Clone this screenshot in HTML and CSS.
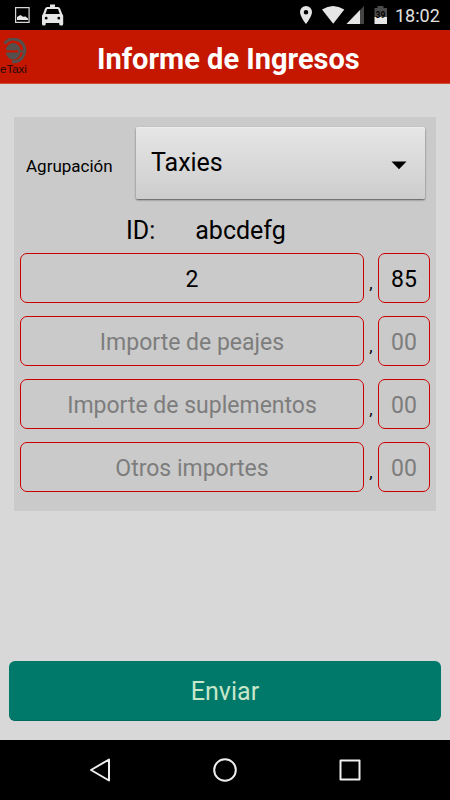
FILE: index.html
```html
<!DOCTYPE html>
<html lang="es">
<head>
<meta charset="utf-8">
<title>Informe de Ingresos</title>
<link rel="stylesheet" href="styles.css">
</head>
<body>
<div class="screen">
  <div class="status">
    <svg class="status-icons" width="70" height="30" viewBox="0 0 70 30">
      <path d="M15.6 7.6h13.5v14.8H15.6z" fill="none" stroke="#d6d6d6" stroke-width="1.2"/>
      <path d="M17 20v-3l3.500-2 2.500 1.800 2.500-.3 2.500 2V20z" fill="#e8e8e8"/>
      <path fill="#e6e6e6" fill-rule="evenodd" d="M50 4.600h5v2.500h3q1.600 0 2.200 1.600L62.200 14q1 1 1 2v8q0 1.500-1.500 1.500h-1q-1.500 0-1.500-1.500v-1H45.700v1q0 1.500-1.500 1.500h-.7Q42 25.500 42 24v-8q0-1 1-2l2-5.300q.6-1.600 2.200-1.600H50zM47.200 9l-1.800 5h14.400L58 9zM44.800 18.200a1.400 1.400 0 1 0 2.800 0 1.400 1.400 0 1 0-2.800 0M57.400 18.200a1.400 1.400 0 1 0 2.800 0 1.400 1.400 0 1 0-2.800 0"/>
    </svg>
    <svg class="status-icons" width="100" height="30" viewBox="290 0 100 30">
      <path fill="#e6e6e6" fill-rule="evenodd" d="M306 6a6 6 0 0 1 6 6c0 4.500-6 12-6 12s-6-7.500-6-12a6 6 0 0 1 6-6zm0 3.900a2.300 2.300 0 1 0 0 4.600 2.300 2.300 0 0 0 0-4.600z"/>
      <path fill="#e6e6e6" d="M322 9.500Q333 2.500 344.300 9.500L333.200 23.800z"/>
      <path fill="#444" d="M364 6v18h-17.500z"/>
      <path fill="#e6e6e6" d="M360 10v14h-13.500z"/>
      <path fill="#4b4b4b" d="M374.500 8h3V6h6v2h3.500v10h-12.500z"/>
      <path fill="#e6e6e6" d="M374.500 17H387v7h-12.500z"/>
      <text class="charge" x="380.500" y="18">39</text>
    </svg>
    <span class="clock">18:02</span>
  </div>
  <header class="header">
    <div class="brand">
      <svg class="brand-mark" width="28" height="28" viewBox="0 0 28 28">
        <path d="M4.500 5.500A11.300 11.300 0 1 1 12 23.600" fill="none" stroke="#55504d" stroke-width="3"/>
        <path d="M6 12.200a7 7 0 0 1 14.300 0zM6 14.500h14.300a7 7 0 0 1-14.300 0z" fill="#55504d"/>
        <path d="M18 12.200h7v2.300h-7z" fill="#55504d"/>
      </svg>
      <span class="brand-name">eTaxi</span>
    </div>
    <h1 class="title">Informe de Ingresos</h1>
  </header>
  <main class="main">
    <section class="card">
      <div class="group">
        <span class="label">Agrupación</span>
        <div class="select"><span>Taxies</span><svg width="16" height="9" viewBox="0 0 16 9"><path d="M.5.5h15L8 8.300z"/></svg></div>
      </div>
      <div class="id-row"><span>ID:</span><span>abcdefg</span></div>
      <div class="rows">
        <div class="row"><div class="field">2</div><span class="comma">,</span><div class="field cents">85</div></div>
        <div class="row"><div class="field hint">Importe de peajes</div><span class="comma">,</span><div class="field cents hint">00</div></div>
        <div class="row"><div class="field hint">Importe de suplementos</div><span class="comma">,</span><div class="field cents hint">00</div></div>
        <div class="row"><div class="field hint">Otros importes</div><span class="comma">,</span><div class="field cents hint">00</div></div>
      </div>
    </section>
    <div class="send">Enviar</div>
  </main>
  <nav class="nav">
    <svg width="450" height="60" viewBox="0 0 450 60" fill="none" stroke="#eee" stroke-width="2" stroke-linejoin="round">
      <path d="M109 19.500v21L91 30z"/>
      <circle cx="225" cy="30" r="10.800"/>
      <path d="M340.500 20.500h19v19h-19z"/>
    </svg>
  </nav>
</div>
</body>
</html>
```

FILE: styles.css
```css
* { box-sizing: border-box; }
body { margin: 0; font-family: Roboto, sans-serif; color: #000; }
svg { display: block; }
.screen { width: 450px; height: 800px; display: flex; flex-direction: column; background: #d8d8d8; overflow: hidden; }
.status { height: 30px; display: flex; background: #000; color: #e0e0e0; }
.status-icons + .status-icons { margin-left: 220px; }
.clock { margin-left: 5px; font-size: 18px; line-height: 31px; }
.charge { font: bold 8.500px Roboto, sans-serif; text-anchor: middle; fill: #000; }
.header { height: 54px; display: flex; background: #c51700; border-bottom: 1px solid #cf4c3c; }
.brand { width: 29px; padding-top: 8px; }
.brand-mark { margin-bottom: -4px; }
.brand-name { display: block; font: 11.500px/14px "Liberation Sans", sans-serif; color: #1c0906; white-space: nowrap; }
.title { flex: 1; margin: 0; padding-left: 68px; font-size: 29px; line-height: 58px; font-weight: 700; color: #fff; white-space: nowrap; }
.main { flex: 1; display: flex; flex-direction: column; justify-content: space-between; padding: 33px 9px 19px; }
.card { height: 394px; margin: 0 5px; padding: 9px 6px 0; background: #cacaca; }
.group { height: 73px; display: flex; align-items: center; padding: 0 5px 0 6px; }
.label { width: 110px; padding-top: 7px; font-size: 17px; line-height: 20px; }
.select { flex: 1; height: 72px; display: flex; align-items: center; justify-content: space-between; padding: 2px 18px 0 15px; border-radius: 2px; background: linear-gradient(#e6e6e6, #cdcdcd); box-shadow: 0 1px 2px #555, inset 0 1px #ededed; font-size: 25px; }
.select span { margin-top: -2px; }
.select svg { margin-top: 3px; }
.id-row { height: 54px; display: flex; gap: 40px; padding: 5px 0 0 106px; font-size: 25px; line-height: 54px; }
.rows { display: grid; gap: 13px; }
.row { display: flex; height: 50px; }
.field { flex: 1; display: flex; align-items: center; justify-content: center; padding-top: 2px; border: 1.300px solid #cd0000; border-radius: 7px; font-size: 23px; }
.cents { flex: 0 0 52px; }
.hint { color: #7d7d7d; }
.comma { width: 14px; text-align: center; font-size: 17px; line-height: 60px; }
.send { height: 60px; border-radius: 6px; background: #00796b; border-bottom: 1px solid #006a5d; color: #c8e6c9; text-align: center; font-size: 25px; line-height: 62px; }
.nav { height: 60px; background: #000; }
```
